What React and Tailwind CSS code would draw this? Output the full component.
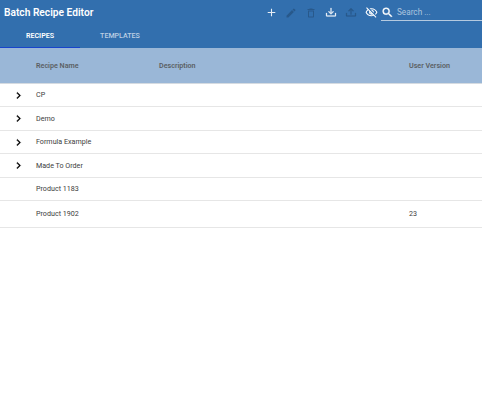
import React from "react";
import { MdAdd, MdEdit, MdDeleteOutline, MdOutlineVisibilityOff } from "react-icons/md";

function Glyph({ d, className }) {
  return (
    <svg viewBox="0 0 24 24" fill="currentColor" className={className}>
      <path d={d} />
    </svg>
  );
}

const down = "M2 12H4V17H20V12H22V17C22 18.11 21.11 19 20 19H4C2.9 19 2 18.11 2 17V12M12 15L17.55 9.54L16.13 8.13L13 11.25V2H11V11.25L7.88 8.13L6.46 9.55L12 15Z";
const up = "M2 12H4V17H20V12H22V17C22 18.11 21.11 19 20 19H4C2.9 19 2 18.11 2 17V12M12 2L6.46 7.46L7.88 8.88L11 5.75V15H13V5.75L16.13 8.88L17.55 7.45L12 2Z";
const magnifier = "M15.5 14h-.79l-.28-.27A6.47 6.47 0 0 0 16 9.5 6.5 6.5 0 1 0 9.5 16c1.61 0 3.09-.59 4.23-1.57l.27.28v.79l5 4.99L20.49 19l-4.99-5zm-6 0C7.01 14 5 11.99 5 9.5S7.01 5 9.5 5 14 7.01 14 9.5 11.99 14 9.5 14z";
const chevron = "M10 6L8.59 7.41 13.17 12l-4.58 4.59L10 18l6-6z";

const rows = [
  { name: "CP", group: true, size: "h-[23px]" },
  { name: "Demo", group: true, size: "h-6" },
  { name: "Formula Example", group: true, size: "h-[23px]" },
  { name: "Made To Order", group: true, size: "h-6" },
  { name: "Product 1183", size: "h-[23px]" },
  { name: "Product 1902", version: "23", size: "h-[27px]" },
];

export default function App() {
  return (
    <div className="h-[418px] w-[482px] overflow-hidden bg-white font-[Roboto,sans-serif]">
      <header className="bg-[#326fae] text-[#e6edf5]">
        <div className="flex h-6 items-center pl-1">
          <h1 className="w-[261px] pt-px text-[10.2px] leading-6 font-semibold text-white">Batch Recipe Editor</h1>
          <div className="flex items-center gap-2 pt-px">
            <MdAdd className="-mr-px size-[13px]" />
            <MdEdit className="size-3 text-[#28598b]" />
            <MdDeleteOutline className="size-3 text-[#28598b]" />
            <Glyph d={down} className="size-3 stroke-current stroke-[0.5]" />
            <Glyph d={up} className="size-3 stroke-current stroke-[0.5] text-[#28598b]" />
            <MdOutlineVisibilityOff className="size-[13px] text-white" />
          </div>
          <label className="ml-[3px] flex h-[17px] flex-1 items-center border-b border-[#b5cae0]">
            <Glyph d={magnifier} className="mt-px size-[13px] stroke-current stroke-[0.7] text-white" />
            <span className="ml-[3px] pt-px text-[8.2px] text-[#adc5df]">Search ...</span>
          </label>
        </div>
        <nav className="flex h-6 text-center text-[7.1px] leading-6 font-medium">
          <div className="w-20 border-b border-[#1744cc] font-semibold text-white">RECIPES</div>
          <div className="w-20 text-[#bdd0e4]">TEMPLATES</div>
        </nav>
      </header>
      <div className="grid h-9 grid-cols-[36px_123px_250px_1fr] items-center border-b border-[#d5dbe1] bg-[#9ab7d7] pt-px text-[7.15px] font-semibold text-[#5b5f63]">
        <span />
        <span>Recipe Name</span>
        <span>Description</span>
        <span>User Version</span>
      </div>
      {rows.map((row) => (
        <div key={row.name} className={`grid grid-cols-[36px_123px_250px_1fr] items-center border-b border-[#e6e6e6] text-[7.15px] text-[#3c3c3c] ${row.size}`}>
          <span className="flex justify-center">{row.group && <Glyph d={chevron} className="size-[13px] stroke-current stroke-[0.6] text-black" />}</span>
          <span className="pt-px">{row.name}</span>
          <span />
          <span>{row.version}</span>
        </div>
      ))}
    </div>
  );
}
